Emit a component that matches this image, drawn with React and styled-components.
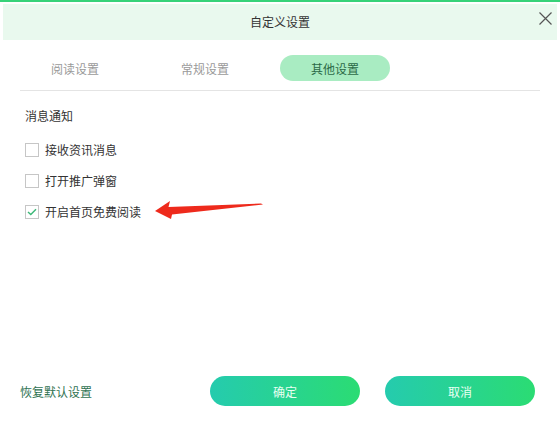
import React, { useState } from 'react'
import styled, { createGlobalStyle } from 'styled-components'

const Global = createGlobalStyle`
  html, body {
    margin: 0;
    padding: 0;
    background: #fff;
  }
  body {
    font-family: "Noto Sans CJK SC", "Noto Sans", sans-serif;
  }
`

const tabs = ['阅读设置', '常规设置', '其他设置']

const options = [
  { label: '接收资讯消息', checked: false },
  { label: '打开推广弹窗', checked: false },
  { label: '开启首页免费阅读', checked: true },
]

export default function App() {
  const [active, setActive] = useState(2)
  const [items, setItems] = useState(options)

  const toggle = (idx) => {
    setItems(items.map((it, i) => (i === idx ? { ...it, checked: !it.checked } : it)))
  }

  return (
    <Dialog>
      <Global />
      <Header>
        <Title>自定义设置</Title>
        <Close aria-label="关闭">
          <svg width="13" height="13" viewBox="0 0 13 13">
            <path d="M0.5 0.5 L12.5 12.5 M12.5 0.5 L0.5 12.5" stroke="#555" strokeWidth="1.2" fill="none" />
          </svg>
        </Close>
      </Header>

      <TabBar>
        { tabs.map((t, idx) => (
          <Tab key={ t } active={ idx === active } onClick={ () => setActive(idx) }>{ t }</Tab>
        )) }
      </TabBar>
      <Divider />

      <Body>
        <SectionTitle>消息通知</SectionTitle>
        { items.map((it, idx) => (
          <Row key={ it.label } onClick={ () => toggle(idx) }>
            <Box>
              { it.checked && (
                <svg width="10" height="8" viewBox="0 0 10 8">
                  <polyline points="1,4 3.8,6.6 9,1.2" fill="none" stroke="#3cb878" strokeWidth="1.4" />
                </svg>
              ) }
            </Box>
            <Label>{ it.label }</Label>
            { idx === 2 && (
              <Arrow width="110" height="22" viewBox="0 0 110 22">
                <path d="M0 11 L15 1 L13.5 7 L106 3.5 L108 4.5 L17 14.5 L16 19 Z" fill="#ee2a1c" />
              </Arrow>
            ) }
          </Row>
        )) }
      </Body>

      <Footer>
        <Restore>恢复默认设置</Restore>
        <Button>确定</Button>
        <Button>取消</Button>
      </Footer>
    </Dialog>
  )
}

const Dialog = styled.div`
  width: 560px;
  height: 426px;
  box-sizing: border-box;
  border-top: 2px solid #37d278;
  padding-top: 2px;
  display: flex;
  flex-direction: column;
  background: #fff;
  overflow: hidden;
`

const Header = styled.div`
  position: relative;
  height: 36px;
  margin: 0 3px;
  background: #e9f9ee;
  display: flex;
  align-items: center;
  justify-content: center;
`

const Title = styled.div`
  font-size: 12px;
  color: #333;
  margin-top: -2px;
`

const Close = styled.div`
  position: absolute;
  right: 5px;
  top: 8px;
  width: 13px;
  height: 13px;
  cursor: pointer;
  display: flex;
`

const TabBar = styled.div`
  display: flex;
  gap: 20px;
  padding-left: 20px;
  margin-top: 15px;
`

const Tab = styled.div`
  width: 110px;
  height: 26px;
  border-radius: 13px;
  display: flex;
  align-items: center;
  justify-content: center;
  font-size: 12px;
  cursor: pointer;
  color: ${(props) => (props.active ? '#2b6a47' : '#9a9a9a')};
  background: ${(props) => (props.active ? '#a9ecc2' : 'transparent')};
`

const Divider = styled.div`
  height: 1px;
  margin: 9px 20px 0;
  background: #e4e4e4;
`

const Body = styled.div`
  padding: 17px 0 0 25px;
  display: flex;
  flex-direction: column;
`

const SectionTitle = styled.div`
  font-size: 12px;
  line-height: 16px;
  color: #333;
  margin-bottom: 10px;
`

const Row = styled.div`
  position: relative;
  height: 31px;
  display: flex;
  align-items: center;
  cursor: pointer;
`

const Box = styled.span`
  width: 12px;
  height: 12px;
  border: 1px solid #c6c6c6;
  background: #fff;
  display: flex;
  align-items: center;
  justify-content: center;
  margin-right: 6px;
`

const Label = styled.span`
  font-size: 12px;
  color: #333;
`

const Arrow = styled.svg`
  position: absolute;
  left: 130px;
  top: 4px;
`

const Footer = styled.div`
  margin-top: auto;
  display: grid;
  grid-template-columns: 165px 150px 150px;
  column-gap: 25px;
  align-items: center;
  padding: 0 0 20px 20px;
`

const Restore = styled.div`
  font-size: 12px;
  color: #2f7352;
  cursor: pointer;
`

const Button = styled.button`
  height: 30px;
  border: none;
  border-radius: 15px;
  background: linear-gradient(90deg, #25cbae 0%, #2bdc73 100%);
  color: #e8fff2;
  font-family: inherit;
  font-size: 12px;
  cursor: pointer;
`
